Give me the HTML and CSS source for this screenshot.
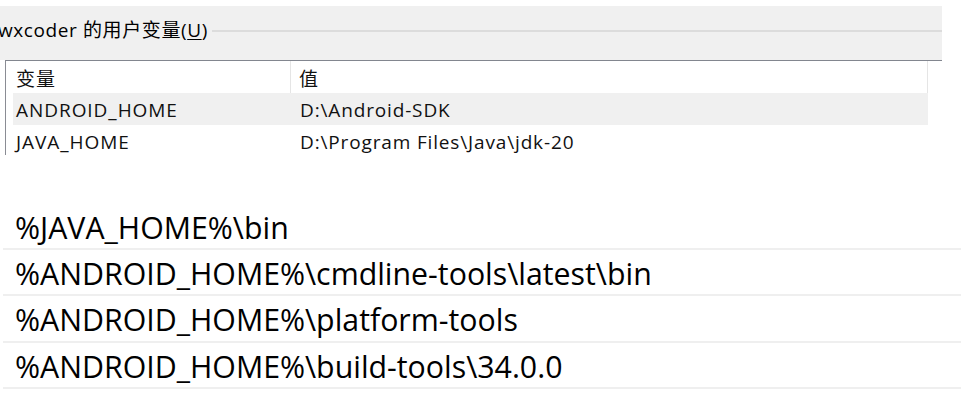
FILE: index.html
```html
<!DOCTYPE html>
<html lang="zh-CN">
<head>
<meta charset="utf-8">
<title>环境变量</title>
<link rel="stylesheet" href="styles.css">
</head>
<body>
<div class="panel">
  <div class="group-title">
    <span class="group-label">wxcoder 的用户变量(<u>U</u>)</span>
    <span class="group-line"></span>
  </div>
</div>
<div class="table">
  <div class="row head">
    <div class="cell c1">变量</div>
    <div class="cell c2">值</div>
  </div>
  <div class="row alt">
    <div class="cell c1">ANDROID_HOME</div>
    <div class="cell c2">D:\Android-SDK</div>
  </div>
  <div class="row">
    <div class="cell c1">JAVA_HOME</div>
    <div class="cell c2">D:\Program Files\Java\jdk-20</div>
  </div>
</div>
<div class="paths">
  <div class="path">%JAVA_HOME%\bin</div>
  <div class="path">%ANDROID_HOME%\cmdline-tools\latest\bin</div>
  <div class="path tall">%ANDROID_HOME%\platform-tools</div>
  <div class="path">%ANDROID_HOME%\build-tools\34.0.0</div>
</div>
</body>
</html>
```

FILE: styles.css
```css
html, body {
  margin: 0;
  padding: 0;
  background: #ffffff;
  font-family: "Open Sans", "Noto Sans CJK SC", sans-serif;
  color: #000;
  overflow: hidden;
}

.panel {
  margin-top: 6px;
  width: 942px;
  height: 54px;
  background: #f0f0f0;
  display: flex;
  flex-direction: column;
}

.group-title {
  display: flex;
  align-items: center;
  height: 49px;
}

.group-label {
  font-size: 19px;
  letter-spacing: 0.6px;
  margin-left: -2px;
  padding-right: 4px;
  white-space: nowrap;
  line-height: 1;
}

.group-label u {
  text-underline-offset: 2px;
}

.group-line {
  flex: 1;
  height: 0;
  border-top: 2px solid #dcdcdc;
}

.table {
  margin-left: 5px;
  width: 936px;
  height: 94px;
  border-left: 1px solid #8a8c94;
  border-top: 1px solid #82868f;
  background: #fff;
  font-size: 19px;
  letter-spacing: 0.95px;
  color: #111;
}

.row {
  display: flex;
  margin-left: 7px;
  width: 915px;
  height: 32px;
  align-items: center;
}

.row.alt {
  background: #f0f0f0;
}

.row.head {
  border-right: 1px solid #e5e5e5;
  box-sizing: border-box;
}

.cell {
  height: 100%;
  display: flex;
  align-items: center;
  white-space: nowrap;
  box-sizing: border-box;
  padding-top: 2px;
}

.c1 {
  width: 278px;
  padding-left: 3px;
}

.c2 {
  flex: 1;
  padding-left: 9px;
  letter-spacing: 0.85px;
}

.head .c1 {
  border-right: 1px solid #e5e5e5;
}

.head .c2 {
  padding-left: 8px;
}

.paths {
  margin-top: 49px;
}

.path {
  height: 42px;
  border-bottom: 2px solid #efefef;
  margin-left: 3px;
  padding-left: 12px;
  padding-top: 2px;
  font-size: 30.3px;
  display: flex;
  align-items: center;
  white-space: nowrap;
}

.path.tall {
  height: 43px;
}
```
